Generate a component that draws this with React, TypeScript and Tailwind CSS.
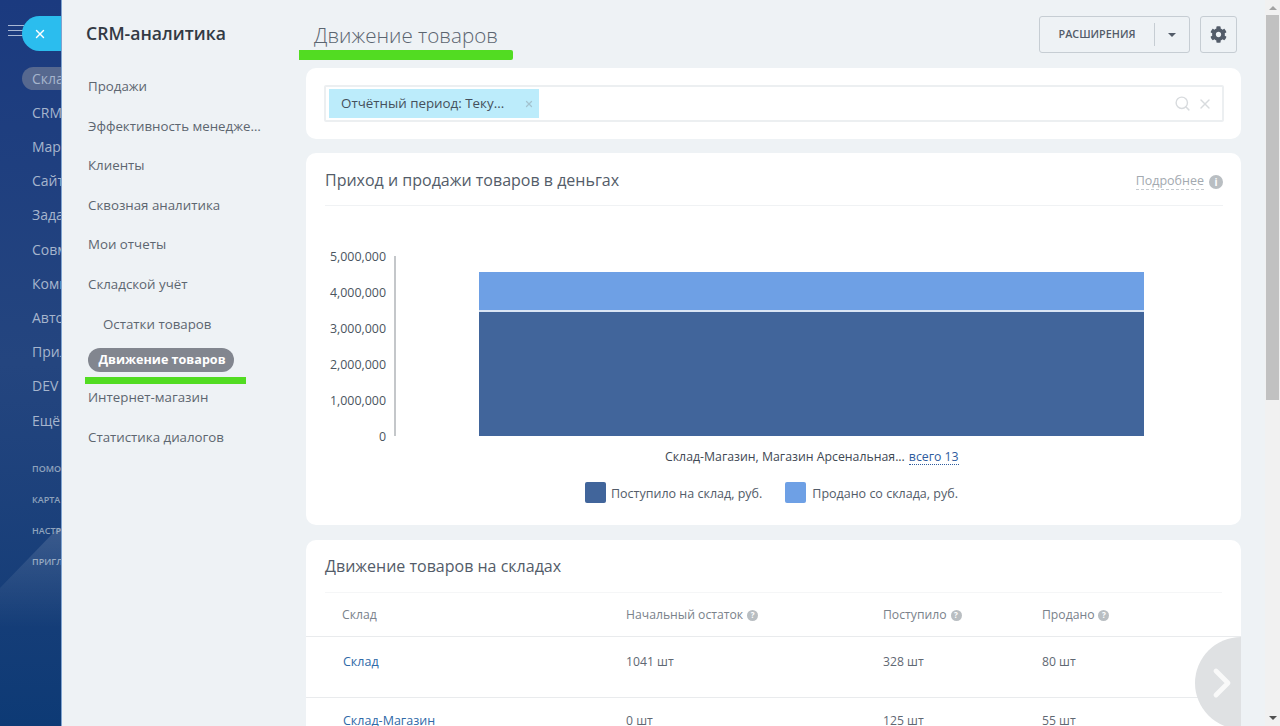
import React from "react";
import { Search, X, ChevronRight } from "lucide-react";
import { FaCog } from "react-icons/fa";

const leftItems = ["Склад", "CRM", "Маркетинг", "Сайты", "Задачи", "Совместная", "Компания", "Автоматизация", "Приложения", "DEV", "Ещё"];
const leftBottom = ["помощь", "карта", "настройки", "пригласить"];
const yTicks = ["5,000,000", "4,000,000", "3,000,000", "2,000,000", "1,000,000", "0"];

function Q() {
  return <span className="inline-flex h-[11px] w-[11px] items-center justify-center rounded-full bg-[#b9bec2] text-[8px] font-bold leading-none text-white">?</span>;
}

export default function App() {
  return (
    <div className="relative flex h-[726px] w-[1280px] overflow-hidden bg-[#eef2f5] font-['Open_Sans',sans-serif] text-[#5d6670]">
      {/* left strip */}
      <div className="relative h-full w-[62px] shrink-0 overflow-hidden border-r border-[#7fa3cf] bg-gradient-to-b from-[#1b3a7f] via-[#24457f] to-[#0d3a75]">
        <svg className="absolute left-0 top-[528px]" width="62" height="100" viewBox="0 0 62 100">
          <defs>
            <linearGradient id="streak" x1="0" y1="0" x2="0" y2="1">
              <stop offset="0" stopColor="#ffffff" stopOpacity="0.14" />
              <stop offset="1" stopColor="#ffffff" stopOpacity="0" />
            </linearGradient>
          </defs>
          <path d="M0 60 L58 0 L62 0 L62 100 L0 100Z" fill="url(#streak)" />
        </svg>
        <div className="absolute left-[8px] top-[25px] flex flex-col gap-[4px]">
          <span className="h-px w-[16px] bg-[#a9b8d4]" />
          <span className="h-px w-[16px] bg-[#a9b8d4]" />
          <span className="h-px w-[16px] bg-[#a9b8d4]" />
        </div>
        <div className="absolute left-[22px] top-[16px] flex h-[35px] w-[40px] items-center rounded-l-full bg-[#2bbdee] pl-[11px]">
          <X size={14} strokeWidth={2.5} className="text-white" />
        </div>
        <div className="flex flex-col gap-[14.2px] whitespace-nowrap pt-[67px] text-[14px] text-[#a6b5cd]">
          {leftItems.map((t, i) => (
            <div key={t} className={i === 0 ? "ml-[22px] -mb-[1.3px] rounded-l-full bg-[#56688f] pl-[10px] leading-[23px]" : "ml-[32px] leading-[20px]"}>
              {t}
            </div>
          ))}
        </div>
        <div className="ml-[32px] mt-[30px] flex flex-col gap-[16px] whitespace-nowrap text-[9px] font-semibold uppercase leading-[15px] text-[#8fa3bd]">
          {leftBottom.map((t) => (
            <div key={t}>{t}</div>
          ))}
        </div>
      </div>

      {/* sidebar */}
      <aside className="h-full w-[244px] shrink-0 pl-[24px]">
        <div className="mt-[21px] text-[17.6px] font-semibold leading-[24px] text-[#333a44]">CRM-аналитика</div>
        <nav className="mt-[31px] flex flex-col text-[13.3px] leading-[20px]">
          <a className="ml-[2px] h-[39.6px]">Продажи</a>
          <a className="ml-[2px] h-[39.6px] w-[173px] truncate">Эффективность менеджеров</a>
          <a className="ml-[2px] h-[39.6px]">Клиенты</a>
          <a className="ml-[2px] h-[39.6px]">Сквозная аналитика</a>
          <a className="ml-[2px] h-[39.6px]">Мои отчеты</a>
          <a className="ml-[2px] h-[40px]">Складской учёт</a>
          <a className="ml-[17px] h-[34px]">Остатки товаров</a>
          <a className="mb-[15px] ml-[2px] flex h-[24px] w-[146px] items-center justify-center rounded-full bg-[#82868f] pl-[2px] text-[12.6px] font-bold text-white">Движение товаров</a>
          <a className="ml-[2px] h-[40px]">Интернет-магазин</a>
          <a className="ml-[2px] h-[40px]">Статистика диалогов</a>
        </nav>
      </aside>
      <span className="absolute left-[85px] top-[377px] h-[7px] w-[161px] bg-[#52dc22]" />

      {/* main */}
      <main className="h-full w-[935px] shrink-0">
        <header className="flex h-[68px] items-start justify-between pl-[8px] pr-[4px] pt-[16px]">
          <h1 className="mt-[4px] text-[20.6px] font-light leading-[30px] text-[#5b6570]">Движение товаров</h1>
          <div className="flex gap-[10px]">
            <div className="flex h-[37px] w-[151px] items-center rounded-[3px] border border-[#c6cdd3] text-[#535c69]">
              <span className="w-[114px] text-center text-[10.8px] font-semibold">РАСШИРЕНИЯ</span>
              <span className="h-[23px] w-px bg-[#c6cdd3]" />
              <span className="ml-[13px] h-0 w-0 border-x-[4px] border-t-[4px] border-x-transparent border-t-[#535c69]" />
            </div>
            <div className="flex h-[37px] w-[37px] items-center justify-center rounded-[3px] border border-[#c6cdd3] pr-[1px] text-[#535c69]">
              <FaCog size={17} />
            </div>
          </div>
        </header>

        <section className="flex h-[71px] items-center rounded-[10px] bg-white pl-[18px] pr-[17px]">
          <div className="flex h-[37px] w-full items-center rounded-[2px] border-2 border-[#eceff1] pl-[3px] pr-[9px]">
            <div className="flex h-[29px] w-[210px] items-center justify-between bg-[#bcecfb] pl-[12px] pr-[5px] text-[13.35px] text-[#45505c]">
              <span>Отчётный период: Теку...</span>
              <X size={10} strokeWidth={3} className="text-[#a4c3cf]" />
            </div>
            <div className="ml-auto flex items-center gap-[6px] text-[#d8dbde]">
              <Search size={17} />
              <X size={16} />
            </div>
          </div>
        </section>

        <section className="mt-[14px] h-[372px] rounded-[10px] bg-white pl-[19px] pr-[18px]">
          <div className="flex h-[53px] items-center justify-between border-b border-[#f0f2f4] pt-[1px]">
            <h2 className="text-[16px] text-[#535c69]">Приход и продажи товаров в деньгах</h2>
            <div className="flex items-center gap-[5px] pt-[4px] text-[12.5px] text-[#a3a9b0]">
              <span className="border-b border-dashed border-[#c6cbd0] leading-[16px]">Подробнее</span>
              <span className="flex h-[14px] w-[14px] items-center justify-center rounded-full bg-[#b9bec2] text-[10px] font-bold leading-none text-white">i</span>
            </div>
          </div>
          <div className="mt-[50px] flex h-[180px] items-stretch">
            <div className="mt-[1px] flex h-[180px] w-[61px] flex-col justify-between text-right text-[12.4px] leading-[0] text-[#4b5560]">
              {yTicks.map((t) => (
                <span key={t} className="block h-0">{t}</span>
              ))}
            </div>
            <div className="ml-[8px] w-[2px] bg-[#c4c7ca]" />
            <div className="ml-[83px] flex h-full w-[665px] flex-col justify-end">
              <div className="h-[38px] bg-[#6ea0e5]" />
              <div className="h-[2px] bg-[#d9e5f5]" />
              <div className="h-[124px] bg-[#41659b]" />
            </div>
          </div>
          <div className="mt-[12px] flex h-[18px] items-center text-[12.3px] text-[#3f4954]">
            <span className="ml-[340px]">Склад-Магазин, Магазин Арсенальная...</span>
            <span className="ml-[4px] border-b border-dotted border-[#2f5c9e] leading-[15px] text-[#2f5c9e]">всего 13</span>
          </div>
          <div className="ml-[260px] mt-[16px] flex h-[21px] items-center text-[12.5px] text-[#535c69]">
            <span className="h-[21px] w-[21px] rounded-[2px] bg-[#41659b]" />
            <span className="ml-[5px] pt-[3px]">Поступило на склад, руб.</span>
            <span className="ml-[23px] h-[21px] w-[21px] rounded-[2px] bg-[#6ea0e5]" />
            <span className="ml-[6px] pt-[3px]">Продано со склада, руб.</span>
          </div>
        </section>

        <section className="mt-[15px] h-[300px] rounded-t-[10px] bg-white text-[12.2px] text-[#5f6873]">
          <h2 className="mx-[19px] flex h-[53px] items-center border-b border-[#f5f6f7] pb-[1px] text-[16px] text-[#535c69]">Движение товаров на складах</h2>
          <div className="grid h-[44px] grid-cols-[284px_257px_159px_1fr] items-center border-b border-[#e9ebed] pl-[36px] pt-[2px] text-[#7a828b]">
            <span>Склад</span>
            <span className="flex items-center gap-[4px]">Начальный остаток <Q /></span>
            <span className="flex items-center gap-[4px]">Поступило <Q /></span>
            <span className="flex items-center gap-[4px]">Продано <Q /></span>
          </div>
          <div className="grid h-[61px] grid-cols-[284px_257px_159px_1fr] items-center border-b border-[#e9ebed] pb-[10px] pl-[36px]">
            <a className="pl-[1px] text-[12.5px] text-[#2f6aa8]">Склад</a>
            <span>1041 шт</span>
            <span>328 шт</span>
            <span>80 шт</span>
          </div>
          <div className="grid h-[61px] grid-cols-[284px_257px_159px_1fr] items-start pl-[36px] pt-[14px]">
            <a className="pl-[1px] text-[12.5px] text-[#2f6aa8]">Склад-Магазин</a>
            <span>0 шт</span>
            <span>125 шт</span>
            <span>55 шт</span>
          </div>
        </section>
      </main>
      <div className="absolute left-[1195px] top-[637px] h-[92px] w-[46px] overflow-hidden">
        <div className="flex h-[92px] w-[92px] items-center rounded-full bg-[#dfe1e3] pl-[3px]">
          <ChevronRight size={48} strokeWidth={2.4} className="text-white/80" />
        </div>
      </div>

      {/* title underline */}
      <span className="absolute left-[299px] top-[50px] h-[10px] w-[214px] rounded-r-[2px] bg-[#52dc22]" />

      {/* scrollbar */}
      <div className="absolute right-0 top-0 flex h-full w-[15px] flex-col items-center justify-between bg-[#f1f1f1]">
        <span className="mt-[6px] h-0 w-0 border-x-[4px] border-b-[4px] border-x-transparent border-b-[#a3a3a3]" />
        <span className="absolute left-[1px] top-[15px] h-[385px] w-[13px] bg-[#c1c1c1]" />
        <span className="mb-[6px] h-0 w-0 border-x-[4px] border-t-[4px] border-x-transparent border-t-[#505050]" />
      </div>
    </div>
  );
}
